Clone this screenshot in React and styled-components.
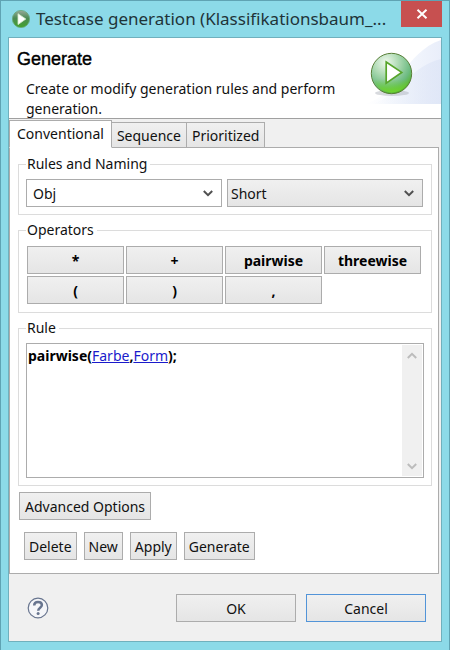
import React, { useState } from "react";
import styled, { createGlobalStyle, css } from "styled-components";

const GlobalStyle = createGlobalStyle`
  * { box-sizing: border-box; }
  body {
    margin: 0;
    background: #8cdae8;
    color: #111;
    font-family: "Noto Sans", "Open Sans", sans-serif;
    font-size: 14px;
    line-height: 20px;
  }
  button, select { font: inherit; color: inherit; }
`;

const Dialog = styled.main`
  display: flex;
  flex-direction: column;
  min-height: 100vh;
  padding: 0 7px 8px;
  border: 1px solid #5fa3b3;
  background: #8cdae8;
`;

const TitleBar = styled.header`
  display: flex;
  align-items: center;
  height: 36px;
  padding-left: 4px;
  gap: 6px;
`;

const Title = styled.h1`
  flex: 1;
  min-width: 0;
  margin: 0;
  font-size: 17px;
  font-weight: 400;
  line-height: 24px;
  color: #1f3438;
  white-space: nowrap;
`;

const CloseButton = styled.button`
  display: grid;
  place-items: center;
  align-self: flex-start;
  width: 41px;
  height: 26px;
  padding: 0;
  border: 0;
  background: #c75050;
`;

const Client = styled.div`
  flex: 1;
  display: flex;
  flex-direction: column;
  border: 1px solid #70b0bd;
  background: #f0f0f0;
`;

const Banner = styled.section`
  display: flex;
  justify-content: space-between;
  height: 81px;
  border-bottom: 1px solid #a0a0a0;
  background: #fff;
`;

const BannerText = styled.div`
  padding: 11px 0 0 8px;
`;

const BannerTitle = styled.h2`
  margin: 0;
  font-family: "Liberation Sans", Arial, sans-serif;
  font-size: 18px;
  font-weight: 400;
  line-height: 20px;
  color: #000;
  -webkit-text-stroke: 0.4px #000;
`;

const BannerMessage = styled.p`
  margin: 10px 0 0 9px;
  max-width: 330px;
`;

const TabList = styled.div`
  position: relative;
  z-index: 1;
  display: flex;
  align-items: flex-end;
  height: 29px;
  padding-top: 1px;
`;

const Tab = styled.button`
  height: 26px;
  padding: 1px 5px 0;
  border: 1px solid #acacac;
  border-left-width: 0;
  background: linear-gradient(#f0f0f0, #e5e5e5);
  white-space: nowrap;
  ${(p) =>
    p["aria-selected"] &&
    css`
      height: 28px;
      padding: 0 7px 1px;
      border-left-width: 1px;
      border-bottom-color: #fff;
      background: #fff;
    `}
`;

const Panel = styled.section`
  flex: 1;
  display: flex;
  flex-direction: column;
  gap: 5px;
  margin: -1px 2px 0 0;
  padding: 6px 6px 13px 8px;
  border: 1px solid #acacac;
  background: #fff;
`;

const Group = styled.fieldset`
  min-width: 0;
  margin: 0;
  padding: 5px 7px 7px;
  border: 1px solid #dcdcdc;
  ${(p) =>
    p.$grow &&
    css`
      flex: 1;
      display: flex;
    `}
`;

const GroupTitle = styled.legend`
  padding: 0 3px 0 1px;
`;

const FieldRow = styled.div`
  display: grid;
  grid-template-columns: 1fr 1fr;
  gap: 5px;
  padding-right: 1px;
`;

const SelectBox = styled.span`
  display: grid;
  grid-template-columns: 1fr 20px;
  align-items: center;
  height: 28px;
  svg {
    grid-area: 1 / 2;
    pointer-events: none;
  }
`;

const Select = styled.select`
  grid-area: 1 / 1 / 2 / 3;
  width: 100%;
  height: 28px;
  padding: 1px ${(p) => (p.$editable ? "6px" : "3px")} 0;
  border: 1px solid #acacac;
  border-radius: 0;
  appearance: none;
  background: ${(p) => (p.$editable ? "#fff" : "linear-gradient(#f0f0f0, #e5e5e5)")};
`;

const Button = styled.button`
  height: 28px;
  min-width: ${(p) => (p.$wide ? "120px" : "0")};
  padding: 1px ${(p) => (p.$compact ? "4px" : "5px")} 0;
  border: 1px solid ${(p) => (p.$focused ? "#5294d8" : "#acacac")};
  background: linear-gradient(#f0f0f0, #e5e5e5);
  white-space: nowrap;
`;

const OperatorGrid = styled.div`
  display: grid;
  grid-template-columns: repeat(4, 1fr);
  gap: 2px;
  padding: 1px 3px 1px 1px;
`;

const OperatorButton = styled(Button)`
  font-weight: 700;
  color: #000;
`;

const Editor = styled.div`
  flex: 1;
  display: flex;
  min-height: 135px;
  padding: 1px;
  border: 1px solid #acacac;
`;

const RuleText = styled.div`
  flex: 1;
  padding-top: 1px;
  font-weight: 700;
  color: #000;
  outline: none;
`;

const RuleLink = styled.a`
  font-weight: 400;
  color: #1a1acb;
  text-decoration: underline;
`;

const ScrollBar = styled.div`
  display: flex;
  flex-direction: column;
  justify-content: space-between;
  width: 20px;
  background: #f0f0f0;
`;

const ScrollButton = styled.button`
  display: grid;
  place-items: center;
  width: 20px;
  height: 21px;
  padding: 0;
  border: 0;
  background: none;
`;

const ActionRow = styled.div`
  display: flex;
  gap: 7px;
  padding: ${(p) => (p.$inset ? "7px 6px 0" : "1px 1px 0")};
`;

const Footer = styled.footer`
  display: flex;
  align-items: center;
  gap: 10px;
  padding: 20px 15px 19px 18px;
`;

const HelpButton = styled.button`
  display: grid;
  margin-right: auto;
  padding: 0;
  border: 0;
  background: none;
`;

const Chevron = ({ up, color = "#505050" }) => (
  <svg width="12" height="8" viewBox="0 0 12 8" fill="none" aria-hidden="true">
    <path d={up ? "M1.8 6 6 1.8 10.2 6" : "M1.8 2 6 6.2 10.2 2"} stroke={color} strokeWidth="2" />
  </svg>
);

const AppIcon = () => (
  <svg width="18" height="18" viewBox="0 0 18 18" aria-hidden="true">
    <defs>
      <linearGradient id="appGreen" x1="0" y1="0" x2="0" y2="1">
        <stop offset="0" stopColor="#9aa99a" />
        <stop offset="0.45" stopColor="#4b8a55" />
        <stop offset="1" stopColor="#43a32c" />
      </linearGradient>
    </defs>
    <circle cx="9" cy="9" r="8.6" fill="url(#appGreen)" stroke="#66a878" strokeWidth="0.8" />
    <path d="M6 3.7 13.8 9 6 14.6Z" fill="#fff" stroke="#d5edcd" strokeWidth="0.8" />
  </svg>
);

const BannerArt = () => (
  <svg width="76" height="66" viewBox="0 0 76 66" aria-hidden="true">
    <defs>
      <linearGradient id="swoosh" x1="0" y1="0" x2="1" y2="0">
        <stop offset="0" stopColor="#fff" />
        <stop offset="0.5" stopColor="#f5f8fd" />
        <stop offset="1" stopColor="#e9eefa" />
      </linearGradient>
      <linearGradient id="swooshFront" x1="0" y1="0" x2="1" y2="0">
        <stop offset="0" stopColor="#dce4f6" stopOpacity="0" />
        <stop offset="1" stopColor="#dce4f6" />
      </linearGradient>
      <radialGradient id="ball" cx="0.36" cy="0.22" r="0.82">
        <stop offset="0" stopColor="#eff8ee" />
        <stop offset="0.35" stopColor="#b4ddb8" />
        <stop offset="0.75" stopColor="#6dbb82" />
        <stop offset="1" stopColor="#52b321" />
      </radialGradient>
      <linearGradient id="glow" x1="0" y1="0" x2="0" y2="1">
        <stop offset="0.65" stopColor="#6fd32f" stopOpacity="0" />
        <stop offset="1" stopColor="#6fd32f" />
      </linearGradient>
    </defs>
    <path d="M0 66C32 58 40 14 76 2V66Z" fill="url(#swoosh)" />
    <path d="M8 66C38 54 46 28 76 21V66Z" fill="url(#swooshFront)" opacity="0.7" />
    <ellipse cx="27" cy="55" rx="17" ry="3" fill="#a9adb5" opacity="0.45" />
    <circle cx="26.5" cy="35.5" r="20.2" fill="url(#ball)" stroke="#597f38" strokeWidth="1" />
    <circle cx="26.5" cy="35.5" r="19" fill="url(#glow)" />
    <path d="M21.2 24 36.7 34.4 21.2 45.2Z" fill="#fff" stroke="#57a52b" strokeWidth="1.7" />
  </svg>
);

const tabs = ["Conventional", "Sequence", "Prioritized"];
const operators = ["*", "+", "pairwise", "threewise", "(", ")", ","];
const actions = ["Delete", "New", "Apply", "Generate"];

export default function App() {
  const [tab, setTab] = useState(tabs[0]);
  return (
    <>
      <GlobalStyle />
      <Dialog>
        <TitleBar>
          <AppIcon />
          <Title>Testcase generation (Klassifikationsbaum_...</Title>
          <CloseButton aria-label="Close">
            <svg width="12" height="10" viewBox="0 0 12 10" aria-hidden="true">
              <path d="M1.5 0.8 10.5 9.2M10.5 0.8 1.5 9.2" stroke="#fff" strokeWidth="2" />
            </svg>
          </CloseButton>
        </TitleBar>
        <Client>
          <Banner>
            <BannerText>
              <BannerTitle>Generate</BannerTitle>
              <BannerMessage>Create or modify generation rules and perform generation.</BannerMessage>
            </BannerText>
            <BannerArt />
          </Banner>
          <TabList role="tablist">
            {tabs.map((name) => (
              <Tab key={name} role="tab" aria-selected={tab === name} onClick={() => setTab(name)}>
                {name}
              </Tab>
            ))}
          </TabList>
          <Panel role="tabpanel" aria-label={tab}>
            <Group>
              <GroupTitle>Rules and Naming</GroupTitle>
              <FieldRow>
                <SelectBox>
                  <Select $editable aria-label="Rule name">
                    <option>Obj</option>
                  </Select>
                  <Chevron />
                </SelectBox>
                <SelectBox>
                  <Select aria-label="Naming">
                    <option>Short</option>
                  </Select>
                  <Chevron />
                </SelectBox>
              </FieldRow>
            </Group>
            <Group>
              <GroupTitle>Operators</GroupTitle>
              <OperatorGrid>
                {operators.map((op) => (
                  <OperatorButton key={op}>{op}</OperatorButton>
                ))}
              </OperatorGrid>
            </Group>
            <Group $grow>
              <GroupTitle>Rule</GroupTitle>
              <Editor>
                <RuleText role="textbox" aria-label="Rule" aria-multiline="true" tabIndex={0}>
                  pairwise(<RuleLink href="#farbe">Farbe</RuleLink>,<RuleLink href="#form">Form</RuleLink>);
                </RuleText>
                <ScrollBar>
                  <ScrollButton aria-label="Scroll up">
                    <Chevron up color="#bcbcbc" />
                  </ScrollButton>
                  <ScrollButton aria-label="Scroll down">
                    <Chevron color="#bcbcbc" />
                  </ScrollButton>
                </ScrollBar>
              </Editor>
            </Group>
            <ActionRow>
              <Button>Advanced Options</Button>
            </ActionRow>
            <ActionRow $inset>
              {actions.map((name) => (
                <Button key={name} $compact>
                  {name}
                </Button>
              ))}
            </ActionRow>
          </Panel>
          <Footer>
            <HelpButton aria-label="Help">
              <svg width="22" height="22" viewBox="0 0 22 22" fill="none" aria-hidden="true">
                <circle cx="11" cy="11" r="9.8" fill="#f5f6f9" stroke="#68758f" strokeWidth="1.2" />
                <path
                  d="M7.2 8.4C7.2 6 8.8 4.9 11 4.9s3.9 1.2 3.9 3.2c0 2.6-3.7 2.7-3.7 5.6"
                  stroke="#68758f"
                  strokeWidth="2.5"
                />
                <circle cx="11.1" cy="16.6" r="1.5" fill="#68758f" />
              </svg>
            </HelpButton>
            <Button $wide>OK</Button>
            <Button $wide $focused>
              Cancel
            </Button>
          </Footer>
        </Client>
      </Dialog>
    </>
  );
}
